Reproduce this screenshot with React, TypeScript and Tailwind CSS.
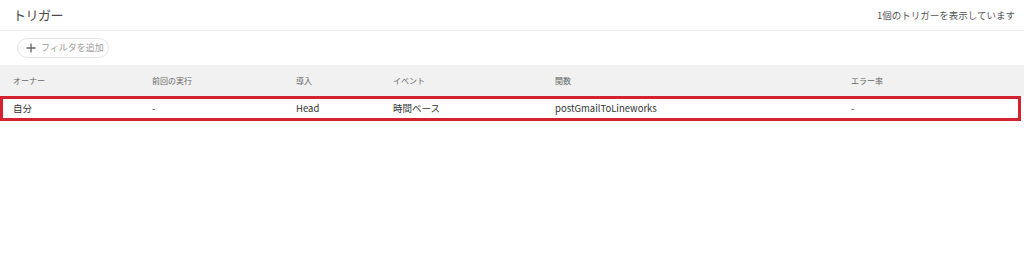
import React from "react";

const cols = "grid grid-cols-[139px_144px_97px_162px_296px_1fr]";

export default function App() {
  return (
    <div className="w-[1024px] h-[261px] bg-white text-[#333] overflow-hidden" style={{ fontFamily: '"Noto Sans CJK JP", "Noto Sans", sans-serif' }}>
      <div className="h-[31px] flex items-center justify-between pl-[13px] pr-[9px] border-b border-[#ececec]">
        <div className="text-[13px] text-[#4a4a4a] tracking-[-0.5px]">トリガー</div>
        <div className="text-[9.5px] text-[#555]">1個のトリガーを表示しています</div>
      </div>
      <div className="h-[34px] flex items-center pl-[17px]">
        <div className="h-[20px] w-[92px] rounded-full border border-[#e4e4e4] flex items-center pl-[8px] gap-[5px]">
          <svg width="10" height="10" viewBox="0 0 10 10"><path d="M5 0.5V9.5M0.5 5H9.5" stroke="#666" strokeWidth="1.3" /></svg>
          <span className="text-[9px] text-[#9a9a9a]">フィルタを追加</span>
        </div>
      </div>
      <div className={`${cols} h-[31px] items-center bg-[#f1f1f1] pl-[13px] text-[8px] text-[#666]`}>
        <div>オーナー</div>
        <div>前回の実行</div>
        <div>導入</div>
        <div>イベント</div>
        <div>関数</div>
        <div>エラー率</div>
      </div>
      <div className="w-[1021px] h-[25px] border-[3px] border-[#d42230] bg-white">
        <div className={`${cols} h-full items-center pl-[10px] text-[9.5px] text-[#333]`}>
          <div>自分</div>
          <div>-</div>
          <div>Head</div>
          <div>時間ベース</div>
          <div>postGmailToLineworks</div>
          <div>-</div>
        </div>
      </div>
    </div>
  );
}
